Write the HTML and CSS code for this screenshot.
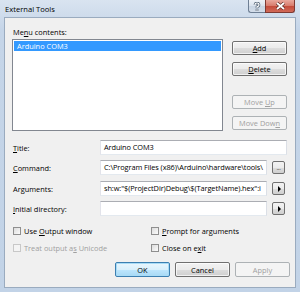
FILE: index.html
```html
<!DOCTYPE html>
<html>
<head>
<meta charset="utf-8">
<link rel="stylesheet" href="styles.css">
</head>
<body>
<div class="window">
  <div class="titlebar">
    <span class="title">External Tools</span>
    <div class="caps">
      <div class="cap help">
        <svg width="8" height="9" viewBox="0 0 8 9"><path d="M2 3 Q2 1 4 1 Q6 1 6 3 Q6 4.3 4 4.8 L4 6" fill="none" stroke="#4d5d70" stroke-width="2.6"/><path d="M2 3 Q2 1 4 1 Q6 1 6 3 Q6 4.3 4 4.8 L4 6" fill="none" stroke="#ffffff" stroke-width="1.2"/><rect x="3" y="7" width="2" height="2" fill="#ffffff" stroke="#4d5d70" stroke-width="0.6"/></svg>
      </div>
      <div class="cap close">
        <svg width="11" height="8" viewBox="0 0 11 8"><path d="M2 1 L9 7 M9 1 L2 7" stroke="#5a2a25" stroke-width="3.2"/><path d="M2 1 L9 7 M9 1 L2 7" stroke="#ffffff" stroke-width="1.8"/></svg>
      </div>
    </div>
  </div>
  <div class="client">
    <div class="top">
      <div class="left">
        <div class="label">Me<u>n</u>u contents:</div>
        <div class="list"><div class="item sel">Arduino COM3</div></div>
      </div>
      <div class="side">
        <div class="btn"><span><u>A</u>dd</span></div>
        <div class="btn gap7"><span><u>D</u>elete</span></div>
        <div class="btn gap19 dis"><span>Move <u>U</u>p</span></div>
        <div class="btn gap7 dis"><span>Move Dow<u>n</u></span></div>
      </div>
    </div>
    <div class="form">
      <div class="row">
        <div class="rlabel"><u>T</u>itle:</div>
        <div class="input wide">Arduino COM3</div>
      </div>
      <div class="row g5">
        <div class="rlabel"><u>C</u>ommand:</div>
        <div class="input">C:\Program Files (x86)\Arduino\hardware\tools\</div>
        <div class="mini"><span class="dots">...</span></div>
      </div>
      <div class="row g6">
        <div class="rlabel">Ar<u>g</u>uments:</div>
        <div class="input">sh:w:"$(ProjectDir)Debug\$(TargetName).hex":i</div>
        <div class="mini"><span class="tri"></span></div>
      </div>
      <div class="row g5">
        <div class="rlabel"><u>I</u>nitial directory:</div>
        <div class="input"></div>
        <div class="mini"><span class="tri"></span></div>
      </div>
    </div>
    <div class="checks">
      <div class="chk"><span class="box"></span><span>Use <u>O</u>utput window</span></div>
      <div class="chk"><span class="box"></span><span><u>P</u>rompt for arguments</span></div>
      <div class="chk dis"><span class="box"></span><span>Treat output a<u>s</u> Unicode</span></div>
      <div class="chk"><span class="box"></span><span>Close on e<u>x</u>it</span></div>
    </div>
    <div class="footer">
      <div class="btn fb def"><span>OK</span></div>
      <div class="btn fb"><span>Cancel</span></div>
      <div class="btn fb dis"><span>Apply</span></div>
    </div>
  </div>
</div>
</body>
</html>
```
FILE: styles.css
```css
* { box-sizing: border-box; }
html, body { margin: 0; padding: 0; }
body {
  width: 300px;
  height: 292px;
  overflow: hidden;
  background: #c6d6e8;
  font-family: "Open Sans", "Noto Sans", sans-serif;
  font-size: 7.4px;
  color: #000;
}
u { text-decoration: underline; text-underline-offset: 1px; }
.window {
  width: 300px;
  height: 292px;
  background: linear-gradient(#d9e4f0, #c5d5e8 30px, #c2d3e7);
  display: flex;
  flex-direction: column;
}
.titlebar {
  height: 17px;
  display: flex;
  justify-content: space-between;
  align-items: flex-start;
  padding-right: 5px;
}
.title {
  padding-left: 5px;
  line-height: 18px;
  font-size: 7.6px;
  color: #000;
}
.caps { display: flex; }
.cap {
  height: 13px;
  display: flex;
  align-items: center;
  justify-content: center;
  border: 1px solid #6e7f94;
  border-top: none;
}
.help {
  width: 17px;
  border-right: none;
  border-bottom-left-radius: 3px;
  background: linear-gradient(#eef2f7, #d9e2ed 50%, #c8d4e2 51%, #d3dde9);
}
.close {
  width: 30px;
  border-color: #7e3a33;
  border-bottom-right-radius: 3px;
  background: linear-gradient(#e9a89d, #d77a6b 50%, #c44a3a 51%, #d16a58);
}
.client {
  margin: 0 4px 4px 4px;
  height: 271px;
  border: 1px solid #9aabbf;
  background: #f0f0f0;
  display: flex;
  flex-direction: column;
}
.top {
  display: flex;
  padding-top: 8px;
}
.left { margin-left: 7px; }
.label {
  line-height: 12px;
  padding-left: 1px;
}
.list {
  margin-top: 1px;
  width: 211px;
  height: 92px;
  border: 1px solid #828790;
  background: #fff;
  padding: 1px;
}
.item {
  height: 10px;
  line-height: 10px;
  padding-left: 3px;
}
.sel { background: #3399ff; color: #fff; }
.side {
  margin-left: 9px;
  padding-top: 15px;
  width: 55px;
  display: flex;
  flex-direction: column;
}
.btn {
  width: 55px;
  height: 14px;
  border: 1px solid #707070;
  border-radius: 2px;
  background: linear-gradient(#f2f2f2, #ebebeb 50%, #dddddd 51%, #cfcfcf);
  display: flex;
  align-items: center;
  justify-content: center;
  line-height: 12px;
  white-space: nowrap;
  box-shadow: inset 0 0 0 1px rgba(255,255,255,0.7);
}
.btn.dis {
  border-color: #adb2b5;
  background: #f4f4f4;
  color: #a0a0a0;
  box-shadow: none;
}
.gap7 { margin-top: 7px; }
.gap19 { margin-top: 19px; }
.form {
  margin-top: 9px;
  padding-left: 8px;
  display: flex;
  flex-direction: column;
}
.row {
  display: flex;
  align-items: center;
  height: 15px;
}
.g5 { margin-top: 5px; }
.g6 { margin-top: 6px; }
.rlabel { width: 87px; }
.input {
  width: 167px;
  height: 15px;
  border: 1px solid #abadb3;
  border-bottom-color: #e3e9ef;
  border-left-color: #e2e3ea;
  border-right-color: #dbdfe6;
  background: #fff;
  padding-left: 3px;
  line-height: 13px;
  white-space: nowrap;
  overflow: hidden;
  letter-spacing: -0.1px;
}
.input.wide { width: 187px; }
.mini {
  margin-left: 5px;
  width: 13px;
  height: 13px;
  border: 1px solid #707070;
  border-radius: 2px;
  background: linear-gradient(#f2f2f2, #ebebeb 50%, #dddddd 51%, #cfcfcf);
  display: flex;
  align-items: center;
  justify-content: center;
}
.dots {
  font-size: 6px;
  line-height: 6px;
  letter-spacing: -0.3px;
  margin-top: 1px;
}
.tri {
  width: 0;
  height: 0;
  border-top: 3px solid transparent;
  border-bottom: 3px solid transparent;
  border-left: 3px solid #000;
  margin-left: 1px;
}
.checks {
  margin-top: 9px;
  padding-left: 8px;
  display: grid;
  grid-template-columns: 138px 1fr;
  row-gap: 5px;
}
.chk {
  display: flex;
  align-items: center;
  height: 12px;
  white-space: nowrap;
}
.box {
  width: 8px;
  height: 8px;
  border: 1px solid #8f8f8f;
  background: linear-gradient(135deg, #dcdcdc, #fbfbfb);
  margin-right: 3px;
}
.chk.dis { color: #a0a0a0; }
.chk.dis .box { border-color: #c8c8c8; background: #f4f4f4; }
.footer {
  margin-top: 8px;
  display: flex;
  justify-content: flex-end;
  gap: 5px;
  padding-right: 5px;
}
.fb { height: 15px; }
.btn.def {
  border-color: #3c7fb1;
  box-shadow: inset 0 0 0 1px #a9dcf6;
  background: linear-gradient(#eaf6fd, #d9f0fc 50%, #bee6fd 51%, #a7d9f5);
}
```
